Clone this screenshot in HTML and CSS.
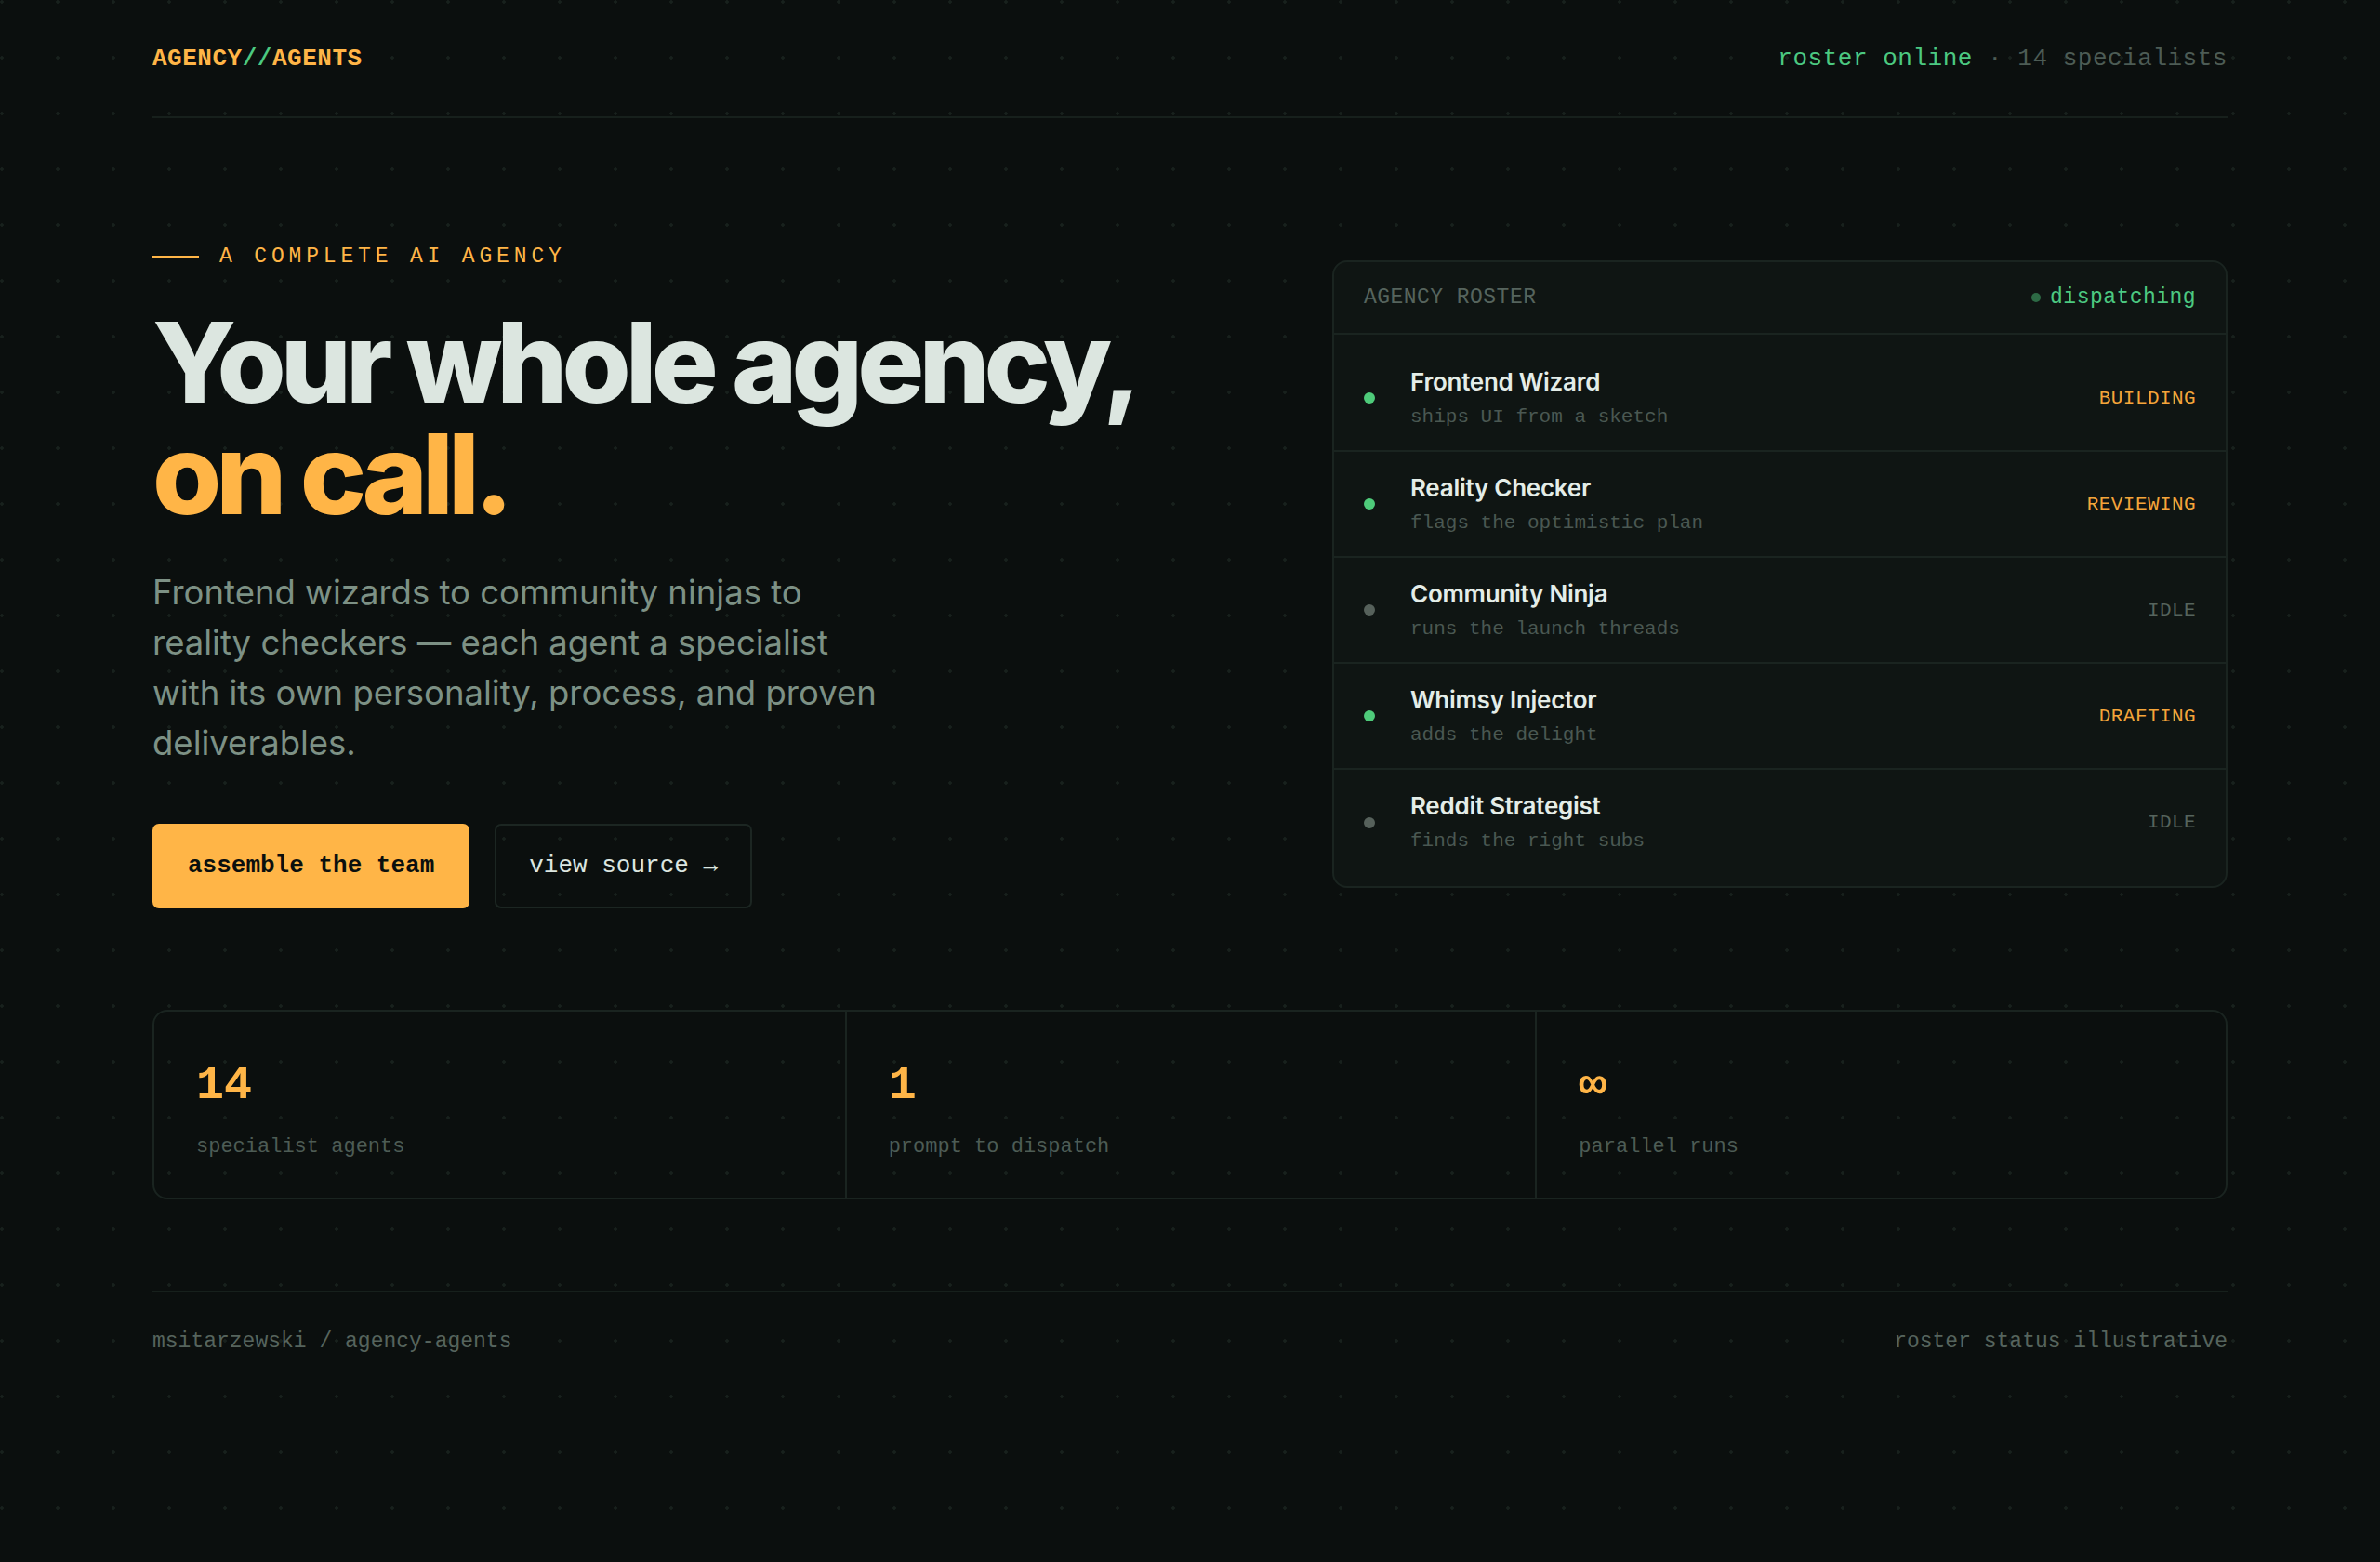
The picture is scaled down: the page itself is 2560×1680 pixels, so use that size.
FILE: index.html
```html
<!DOCTYPE html>
<html lang="en">
<head>
  <meta charset="UTF-8" />
  <meta name="viewport" content="width=device-width, initial-scale=1.0" />
  <title>Agency Agents</title>
  <link rel="stylesheet" href="styles.css">
</head>
<body>
  <div class="page">
    <header class="topbar">
      <div class="logo">AGENCY<span class="slash">//</span>AGENTS</div>
      <div class="status"><span class="online">roster online</span> · 14 specialists</div>
    </header>

    <main class="hero">
      <section class="intro">
        <p class="eyebrow">A COMPLETE AI AGENCY</p>
        <h1>Your whole agency,<br><span class="accent">on call.</span></h1>
        <p class="lede">Frontend wizards to community ninjas to reality checkers — each agent a specialist with its own personality, process, and proven deliverables.</p>
        <div class="actions">
          <a class="btn btn-primary" href="#">assemble the team</a>
          <a class="btn btn-ghost" href="#">view source →</a>
        </div>
      </section>

      <aside class="roster">
        <div class="roster-head">
          <span>AGENCY ROSTER</span>
          <span class="live"><span class="live-dot"></span>dispatching</span>
        </div>
        <ul class="roster-list">
          <li class="agent">
            <span class="dot on"></span>
            <div class="agent-info">
              <div class="agent-name">Frontend Wizard</div>
              <div class="agent-desc">ships UI from a sketch</div>
            </div>
            <span class="agent-state busy">BUILDING</span>
          </li>
          <li class="agent">
            <span class="dot on"></span>
            <div class="agent-info">
              <div class="agent-name">Reality Checker</div>
              <div class="agent-desc">flags the optimistic plan</div>
            </div>
            <span class="agent-state busy">REVIEWING</span>
          </li>
          <li class="agent">
            <span class="dot"></span>
            <div class="agent-info">
              <div class="agent-name">Community Ninja</div>
              <div class="agent-desc">runs the launch threads</div>
            </div>
            <span class="agent-state">IDLE</span>
          </li>
          <li class="agent">
            <span class="dot on"></span>
            <div class="agent-info">
              <div class="agent-name">Whimsy Injector</div>
              <div class="agent-desc">adds the delight</div>
            </div>
            <span class="agent-state busy">DRAFTING</span>
          </li>
          <li class="agent">
            <span class="dot"></span>
            <div class="agent-info">
              <div class="agent-name">Reddit Strategist</div>
              <div class="agent-desc">finds the right subs</div>
            </div>
            <span class="agent-state">IDLE</span>
          </li>
        </ul>
      </aside>
    </main>

    <section class="stats">
      <div class="stat">
        <div class="stat-num">14</div>
        <div class="stat-label">specialist agents</div>
      </div>
      <div class="stat">
        <div class="stat-num">1</div>
        <div class="stat-label">prompt to dispatch</div>
      </div>
      <div class="stat">
        <div class="stat-num">∞</div>
        <div class="stat-label">parallel runs</div>
      </div>
    </section>

    <footer class="footer">
      <span>msitarzewski / agency-agents</span>
      <span>roster status illustrative</span>
    </footer>
  </div>
</body>
</html>
```

FILE: styles.css
```css
body {
  margin: 0;
  background-color: #0b0f0e;
  background-image: radial-gradient(circle at 2px 2px, #18211d 1.5px, transparent 2px);
  background-size: 60px 60px;
  color: #dce6e0;
  font-family: 'Inter', 'Noto Sans', sans-serif;
}
.page {
  padding: 0 164px 120px;
}
.topbar {
  display: flex;
  justify-content: space-between;
  align-items: center;
  padding: 48px 0 47px;
  border-bottom: 2px solid #17201c;
  font-family: 'Liberation Mono', 'DejaVu Sans Mono', monospace;
}
.logo {
  font-size: 26px;
  line-height: 30px;
  font-weight: 700;
  letter-spacing: 0.02em;
  color: #ffb547;
}
.slash {
  color: #4cc981;
}
.status {
  font-size: 26px;
  line-height: 30px;
  letter-spacing: 0.02em;
  color: #4d5c55;
}
.online {
  color: #4cc981;
}

.hero {
  display: grid;
  grid-template-columns: 1fr 963px;
  gap: 80px;
  align-items: center;
  padding-top: 135px;
}
.eyebrow {
  display: flex;
  align-items: center;
  margin: 0;
  font-family: 'Liberation Mono', 'DejaVu Sans Mono', monospace;
  font-size: 23px;
  line-height: 28px;
  letter-spacing: 0.21em;
  color: #ffb547;
}
.eyebrow::before {
  content: "";
  flex: none;
  width: 50px;
  height: 2px;
  margin-right: 22px;
  background: #ffb547;
}
h1 {
  margin: 40px 0 0;
  font-size: 120px;
  line-height: 1;
  font-weight: 800;
  letter-spacing: -0.05em;
  color: #dce6e0;
}
.accent {
  color: #ffb547;
}
.lede {
  margin: 40px 0 0;
  max-width: 800px;
  font-size: 36.5px;
  line-height: 54px;
  color: #7d9185;
}
.actions {
  display: flex;
  gap: 27px;
  margin-top: 60px;
}
.btn {
  font-family: 'Liberation Mono', 'DejaVu Sans Mono', monospace;
  font-size: 26px;
  line-height: 31px;
  text-decoration: none;
  border-radius: 7px;
}
.btn-primary {
  padding: 30px 38px;
  background: #ffb547;
  color: #0b0f0e;
  font-weight: 700;
}
.btn-ghost {
  padding: 28px 35px;
  border: 2px solid #1c2622;
  color: #dce6e0;
}

.roster {
  margin-top: -4px;
  background: #0f1513;
  border: 2px solid #1a2420;
  border-radius: 16px;
  font-family: 'Liberation Mono', 'DejaVu Sans Mono', monospace;
}
.roster-head {
  display: flex;
  justify-content: space-between;
  align-items: center;
  height: 76px;
  padding: 0 32px;
  border-bottom: 2px solid #1a2420;
  font-size: 23px;
  letter-spacing: 0.02em;
  color: #56645d;
}
.live {
  display: flex;
  align-items: center;
  gap: 10px;
  color: #4cc981;
}
.live-dot {
  width: 10px;
  height: 10px;
  border-radius: 50%;
  background: #2d6a45;
}
.roster-list {
  list-style: none;
  margin: 0;
  padding: 12px 0;
}
.agent {
  display: flex;
  align-items: center;
  height: 112px;
  padding: 0 32px;
  border-bottom: 2px solid #1a2420;
}
.agent:last-child {
  border-bottom: none;
  height: 113px;
}
.dot {
  flex: none;
  width: 12px;
  height: 12px;
  border-radius: 50%;
  background: #56615b;
  margin-right: 38px;
}
.dot.on {
  background: #4ecb7a;
}
.agent-info {
  flex: 1;
}
.agent-name {
  font-family: 'Inter', sans-serif;
  font-size: 26px;
  line-height: 32px;
  font-weight: 600;
  letter-spacing: -0.01em;
  color: #e4ede8;
}
.agent-desc {
  margin-top: 9px;
  font-size: 21px;
  line-height: 26px;
  color: #4a5852;
}
.agent-state {
  font-size: 21px;
  letter-spacing: 0.02em;
  color: #56645d;
}
.agent-state.busy {
  color: #f5a53a;
}

.stats {
  display: grid;
  grid-template-columns: repeat(3, 1fr);
  margin-top: 109px;
  border: 2px solid #1a2420;
  border-radius: 16px;
  font-family: 'Liberation Mono', 'DejaVu Sans Mono', monospace;
}
.stat {
  padding: 50px 45px 38px;
}
.stat + .stat {
  border-left: 2px solid #1a2420;
}
.stat-num {
  font-size: 50px;
  line-height: 60px;
  font-weight: 700;
  color: #ffb547;
}
.stat-label {
  margin-top: 20px;
  font-size: 22px;
  line-height: 32px;
  color: #4d5c55;
}

.footer {
  display: flex;
  justify-content: space-between;
  margin-top: 98px;
  padding-top: 38px;
  border-top: 2px solid #17201c;
  font-family: 'Liberation Mono', 'DejaVu Sans Mono', monospace;
  font-size: 23px;
  line-height: 30px;
  color: #56645d;
}
```
